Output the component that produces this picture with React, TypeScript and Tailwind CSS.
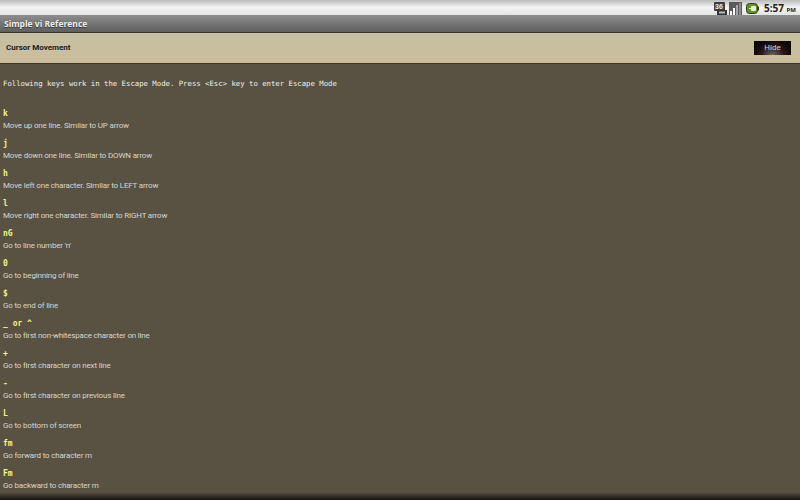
const keys = [
  ["k", "Move up one line. Similar to UP arrow"],
  ["j", "Move down one line. Similar to DOWN arrow"],
  ["h", "Move left one character. Similar to LEFT arrow"],
  ["l", "Move right one character. Similar to RIGHT arrow"],
  ["nG", "Go to line number 'n'"],
  ["0", "Go to beginning of line"],
  ["$", "Go to end of line"],
  ["_ or ^", "Go to first non-whitespace character on line"],
  ["+", "Go to first character on next line"],
  ["-", "Go to first character on previous line"],
  ["L", "Go to bottom of screen"],
  ["fm", "Go forward to character m"],
  ["Fm", "Go backward to character m"],
];

function StatusIcons() {
  return (
    <div className="flex items-center pt-[2px]">
      <svg width="13" height="13" viewBox="0 0 13 13">
        <rect x="0" y="0" width="11" height="9" rx="1" fill="#3f3f3f" />
        <rect x="3" y="8" width="10" height="5" fill="#333" />
        <text x="1" y="7" fontSize="7" fontWeight="700" fill="#f0f0f0" fontFamily="Liberation Sans">36</text>
        <rect x="5" y="9.5" width="6" height="2" fill="#bbb" />
      </svg>
      <svg width="13" height="13" viewBox="0 0 13 13" className="ml-[2px]">
        <rect width="13" height="13" fill="#5a5a5a" />
        <rect x="1" y="9" width="2" height="4" fill="#fff" />
        <rect x="4" y="6" width="2" height="7" fill="#fff" />
        <rect x="7" y="3" width="2" height="10" fill="#a8a8a8" />
        <rect x="10" y="1" width="2" height="12" fill="#8c8c8c" />
      </svg>
      <svg width="13" height="11" viewBox="0 0 13 11" className="ml-[4px]">
        <rect x="0.5" y="0.5" width="11" height="10" rx="3" fill="#5f9420" stroke="#2f3a20" />
        <rect x="11.5" y="3.5" width="1.5" height="4" fill="#333" />
        <rect x="5" y="3" width="5" height="5" rx="1" fill="#e8f0d8" />
        <path d="M3 5.5 H6" stroke="#e8f0d8" />
      </svg>
    </div>
  );
}

export default function App() {
  return (
    <div className="flex h-[500px] w-[800px] flex-col overflow-hidden bg-[#595141] font-['Roboto','Open_Sans',sans-serif]">
      <div className="flex h-[15px] items-center justify-end bg-gradient-to-b from-[#bcbcbc] via-[#f4f4f4] to-[#e4e4e4] pr-[4px]">
        <StatusIcons />
        <span className="ml-[5px] font-['Open_Sans',sans-serif] text-[10px] font-bold leading-none text-[#222]">
          5:57 <span className="text-[6px]">PM</span>
        </span>
      </div>
      <div className="flex h-[17px] items-center bg-gradient-to-b from-[#8e8e8e] to-[#5f5f5f] pl-[4px] pt-[1px] font-['Open_Sans',sans-serif] text-[8.5px] font-bold text-[#efefef] [text-shadow:0_1px_1px_#333]">
        Simple vi Reference
      </div>
      <div className="flex h-[32px] items-center justify-between border-y border-[#3a3528] bg-gradient-to-b from-[#c6c0a4] to-[#cbbd9b] pb-[1px] pl-[6px] pr-[9px] font-['Roboto',sans-serif] text-[8px] font-bold text-[#1b1b1b]">
        <span>Cursor Movement</span>
        <button className="flex h-[14px] w-[37px] items-center justify-center bg-[radial-gradient(ellipse_at_50%_100%,#6b6464_0%,#2a1518_45%,#0b0808_75%)] text-[8px] font-normal text-[#d0d0d0]">
          Hide
        </button>
      </div>
      <div className="relative flex-1 px-[3px] pt-[15px]">
        <p className="h-[29px] font-['DejaVu_Sans_Mono',monospace] text-[7.3px] leading-[10px] text-[#f2f2f2]">
          Following keys work in the Escape Mode. Press &lt;Esc&gt; key to enter Escape Mode
        </p>
        <div className="flex flex-col">
          {keys.map(([key, text]) => (
            <div key={key} className="flex h-[30px] flex-col">
              <span className="h-[12px] whitespace-pre font-['DejaVu_Sans_Mono',monospace] text-[8px] font-bold leading-[12px] text-[#f4f28c]">
                {key}
              </span>
              <span className="h-[12px] text-[8px] leading-[11px] tracking-[-0.18px] text-[#d6d6d0]">{text}</span>
            </div>
          ))}
        </div>
        <div className="absolute inset-x-0 bottom-0 h-[8px] bg-gradient-to-b from-transparent to-[#14120e]" />
      </div>
    </div>
  );
}
